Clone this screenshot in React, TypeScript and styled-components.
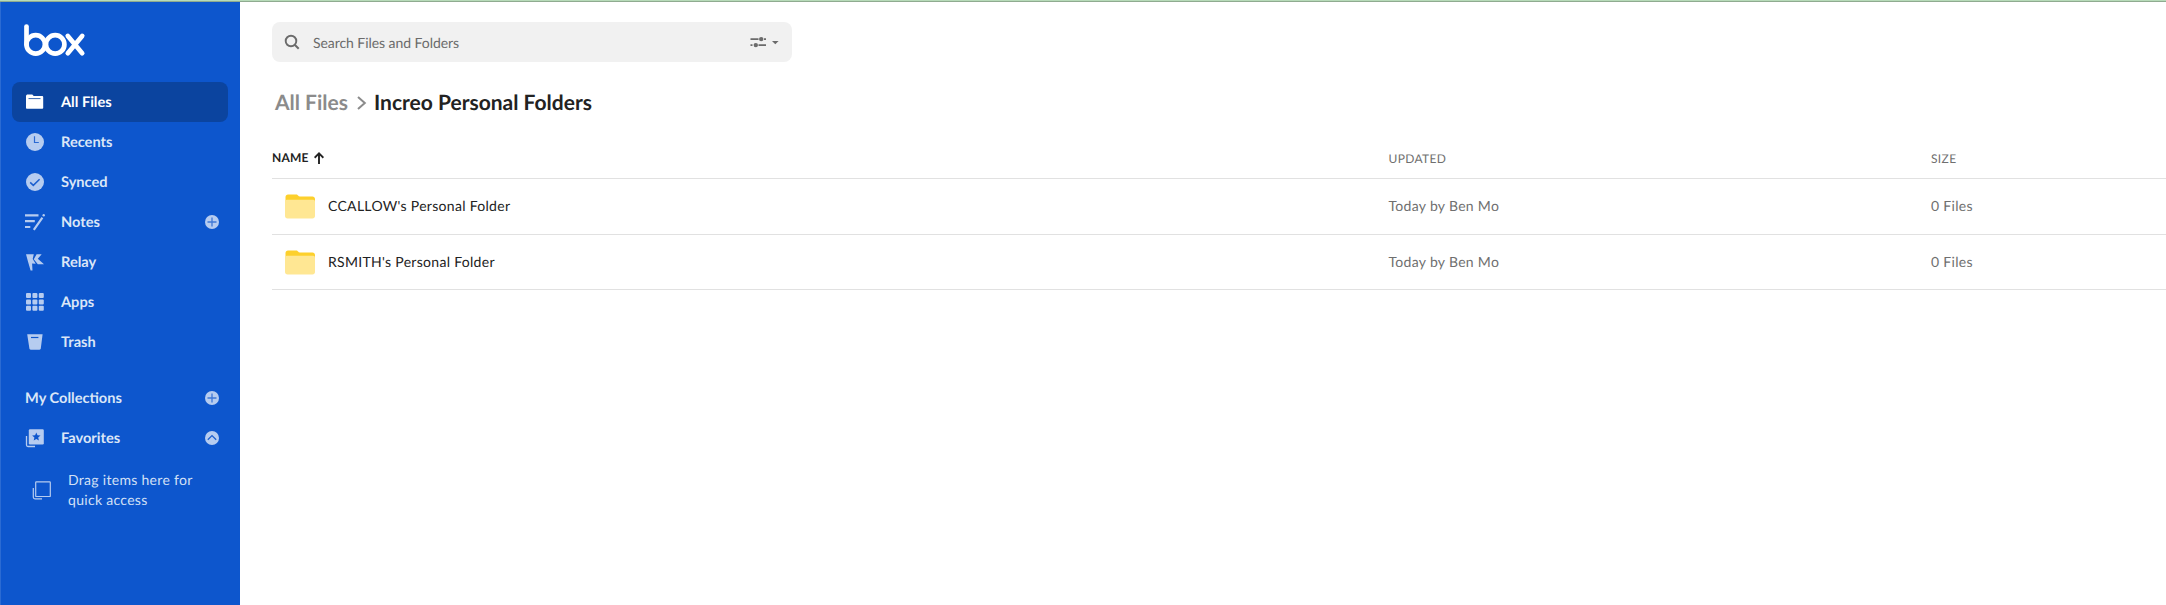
import React from 'react';
import styled, { createGlobalStyle, css } from 'styled-components';

const GlobalStyle = createGlobalStyle`
  *, *::before, *::after { box-sizing: border-box; }
  body {
    margin: 0;
    background: #fff;
    font-family: Lato, 'Liberation Sans', sans-serif;
    font-size: 14px;
    color: #222;
    text-rendering: geometricPrecision;
    -webkit-font-smoothing: antialiased;
  }
`;

const Page = styled.div`
  display: flex;
  flex-direction: column;
  height: 100vh;
  overflow: hidden;
`;

const TopStrip = styled.div`
  flex: none;
  height: 2px;
  background: #b7dbb9;
  border-bottom: 1px solid #8fab90;
`;

const Body = styled.div`
  display: flex;
  flex: 1;
  min-height: 0;
`;

const Sidebar = styled.aside`
  flex: none;
  width: 240px;
  padding: 22px 12px 0 11px;
  border-left: 1px solid #2b6bd3;
  background: #0d56cd;
  color: #dbe6f7;
`;

const LogoLink = styled.div`
  height: 58px;
  padding-left: 12px;
`;

const NavList = styled.nav`
  display: flex;
  flex-direction: column;
`;

const NavItem = styled.div<{ $active?: boolean }>`
  display: flex;
  align-items: center;
  height: 40px;
  padding: 0 8px 0 13px;
  border-radius: 8px;
  font-weight: 700;
  font-size: 14.6px;
  line-height: 20px;
  ${({ $active }) =>
    $active &&
    css`
      background: #0b449f;
      color: #fff;
    `}
`;

const NavIcon = styled.span<{ $active?: boolean }>`
  display: flex;
  width: 20px;
  height: 20px;
  margin-right: 16px;
  color: ${({ $active }) => ($active ? '#fff' : '#b6ccf0')};
`;

const NavLabel = styled.span`
  flex: 1;
  padding-top: 2px;
`;

const RoundAction = styled.span`
  display: flex;
  width: 16px;
  height: 16px;
  color: #b6ccf0;
`;

const SectionHeading = styled(NavItem)`
  margin-top: 16px;
`;

const DropHint = styled.div`
  display: flex;
  align-items: center;
  margin-top: 12px;
  padding-left: 20px;
  gap: 16px;
  font-size: 14px;
  line-height: 20px;
  letter-spacing: 0.3px;
  color: #d3e0f6;
`;

const Main = styled.main`
  flex: 1;
  min-width: 0;
  padding: 20px 0 0 32px;
`;

const SearchBar = styled.div`
  display: flex;
  align-items: center;
  width: 520px;
  height: 40px;
  padding: 0 12px;
  border-radius: 8px;
  background: #f1f1f1;
  color: #6b6b6b;
`;

const SearchText = styled.span`
  flex: 1;
  padding-left: 13px;
  font-size: 14px;
  letter-spacing: -0.06px;
`;

const Breadcrumb = styled.div`
  display: flex;
  align-items: center;
  height: 28px;
  margin-top: 27px;
  padding-left: 3px;
  font-size: 21px;
  font-weight: 700;
  line-height: 28px;
`;

const Crumb = styled.span<{ $current?: boolean }>`
  color: ${({ $current }) => ($current ? '#222' : '#8b8b8b')};
`;

const CrumbArrow = styled.svg`
  margin: 0 7px 0 8px;
`;

const Columns = styled.div`
  display: grid;
  grid-template-columns: 1116.5px 542.5px 1fr;
  align-items: center;
  border-bottom: 1px solid #e1e1e1;
`;

const TableHead = styled(Columns)`
  height: 62px;
  padding-top: 21px;
`;

const HeadCell = styled.div<{ $sorted?: boolean }>`
  display: flex;
  align-items: center;
  gap: 5px;
  padding-top: ${({ $sorted }) => ($sorted ? '0' : '2px')};
  font-size: 12px;
  line-height: 16px;
  font-weight: ${({ $sorted }) => ($sorted ? 700 : 400)};
  color: ${({ $sorted }) => ($sorted ? '#222' : '#6f6f6f')};
  letter-spacing: ${({ $sorted }) => ($sorted ? '0.2px' : '0.35px')};
`;

const Row = styled(Columns)`
  height: 56px;
  padding-bottom: 2px;
  &:last-child { height: 55px; padding-bottom: 1px; }
`;

const NameCell = styled.div`
  display: flex;
  align-items: center;
  gap: 12px;
  padding-left: 12px;
  letter-spacing: 0.3px;
`;

const MutedCell = styled.div`
  color: #6f6f6f;
  letter-spacing: 0.3px;
`;

const BoxLogo = () => (
  <svg width="62" height="34" viewBox="24 24 62 34" fill="none" stroke="#fff" strokeWidth="4.7" strokeLinecap="round">
    <path d="M26.5 26.5V44.5" />
    <circle cx="35.7" cy="44.4" r="9.2" />
    <circle cx="55.2" cy="44.4" r="9.2" />
    <path d="M67.8 35.9L82.2 53.2M82.2 35.9L67.8 53.2" />
  </svg>
);

const icons: Record<string, React.ReactNode> = {
  folder: (
    <>
      <path fill="currentColor" d="M2.7 2.4h4.6l1.4 1.7h8.6c.5 0 .9.4.9.9v10.9c0 .4-.4.8-.9.8H1.8c-.5 0-.8-.4-.8-.8V4C1 3.1 1.8 2.4 2.7 2.4z" />
      <path stroke="#3566b0" strokeWidth="1" d="M3.5 6.6h12" />
    </>
  ),
  clock: (
    <>
      <circle cx="10" cy="10" r="9" fill="currentColor" />
      <path d="M9.5 4.2v6.3h4.3" stroke="#2b69d2" strokeWidth="1.2" />
    </>
  ),
  check: (
    <>
      <circle cx="10" cy="10" r="9" fill="currentColor" />
      <path d="M5.2 10.4l3.1 3 6.3-6.2" stroke="#1c5fcf" strokeWidth="1.5" />
    </>
  ),
  notes: (
    <g stroke="currentColor" strokeWidth="2.2">
      <path d="M0 3.3h13.5M0 9.2h9.8M0 15h5.3M8.8 17.9l8.6-12.2" />
      <circle cx="18.7" cy="3.3" r="1.2" fill="currentColor" stroke="none" />
    </g>
  ),
  relay: (
    <g fill="currentColor">
      <path d="M1 2.2h7.8L7.7 6.9l3 4.8-3.6-.1.4 7H5.6L2.9 9.2z" />
      <path d="M11.6 2.2h5.1L12.8 6.7l6.2 5.6h-6.2L8.8 7.2z" />
    </g>
  ),
  apps: (
    <g fill="currentColor">
      {[1, 7.4, 13.8].map((y) => [1, 7.4, 13.8].map((x) => <rect key={`${x}-${y}`} x={x} y={y} width="5" height="5" rx="1" />))}
    </g>
  ),
  trash: (
    <>
      <path fill="currentColor" d="M2.2 2.3h15.4L15.8 16.6c-.1.7-.6 1.2-1.3 1.2H5.7c-.7 0-1.2-.5-1.3-1.2z" />
      <path d="M6 5.5h7.4" stroke="#0d56cd" strokeWidth="1.2" />
    </>
  ),
  favorites: (
    <>
      <rect x="3.8" y="1.2" width="15" height="15.2" rx="1.2" fill="currentColor" />
      <path d="M1.5 8v9c0 .9.6 1.5 1.5 1.5h7" stroke="currentColor" strokeWidth="1.3" />
      <path fill="#0d56cd" d="M11.3 4.5l1.2 2.8 3 .2-2.3 2 .7 3-2.6-1.6-2.6 1.6.7-3-2.3-2 3-.2z" />
    </>
  ),
  stack: (
    <g stroke="#b6ccf0" strokeWidth="1.2">
      <rect x="3.7" y="1.9" width="14.6" height="14.6" rx=".6" />
      <path d="M1.3 8v9.3c0 1 .6 1.5 1.7 1.5h7" />
    </g>
  ),
};

const Icon = ({ name }: { name: string }) => (
  <svg width="20" height="20" viewBox="0 0 20 20" fill="none">
    {icons[name]}
  </svg>
);

const ActionIcon = ({ kind }: { kind: 'plus' | 'up' }) => (
  <RoundAction>
    <svg width="16" height="16" viewBox="0 0 16 16" fill="none">
      <circle cx="8" cy="8" r="7" fill="currentColor" />
      <path d={kind === 'plus' ? 'M8 3.5v9M3.5 8h9' : 'M3.8 9.8L8 5.6l4.2 4.2'} stroke={kind === 'plus' ? '#3f78d6' : '#1c5fcf'} strokeWidth="1.3" />
    </svg>
  </RoundAction>
);

const FolderIcon = () => (
  <svg width="32" height="32" viewBox="0 0 32 32">
    <path fill="#fdd02c" d="M4 4.5h8.3c.8 0 1.3.5 1.8 1.1.4.5.9.9 1.8.9h12.6c1.4 0 2.5 1 2.5 2.4V12H1.5V7c0-1.4 1.1-2.5 2.5-2.5z" />
    <path fill="#ffe793" d="M1 11.6c0-1 .8-1.8 1.8-1.8h26.4c1 0 1.8.8 1.8 1.8v14.3c0 1.5-1.1 2.5-2.5 2.5h-25C2.1 28.4 1 27.4 1 25.9z" />
  </svg>
);

const navItems = [
  { icon: 'folder', label: 'All Files', active: true },
  { icon: 'clock', label: 'Recents' },
  { icon: 'check', label: 'Synced' },
  { icon: 'notes', label: 'Notes', addable: true },
  { icon: 'relay', label: 'Relay' },
  { icon: 'apps', label: 'Apps' },
  { icon: 'trash', label: 'Trash' },
];

const folders = ["CCALLOW's Personal Folder", "RSMITH's Personal Folder"];

export default function App() {
  return (
    <Page>
      <GlobalStyle />
      <TopStrip />
      <Body>
        <Sidebar>
          <LogoLink><BoxLogo /></LogoLink>
          <NavList>
            {navItems.map(({ icon, label, active, addable }) => (
              <NavItem key={label} $active={active}>
                <NavIcon $active={active}><Icon name={icon} /></NavIcon>
                <NavLabel>{label}</NavLabel>
                {addable && <ActionIcon kind="plus" />}
              </NavItem>
            ))}
          </NavList>
          <SectionHeading>
            <NavLabel>My Collections</NavLabel>
            <ActionIcon kind="plus" />
          </SectionHeading>
          <NavItem>
            <NavIcon><Icon name="favorites" /></NavIcon>
            <NavLabel>Favorites</NavLabel>
            <ActionIcon kind="up" />
          </NavItem>
          <DropHint>
            <Icon name="stack" />
            <span>Drag items here for<br />quick access</span>
          </DropHint>
        </Sidebar>
        <Main>
          <SearchBar>
            <svg width="16" height="16" viewBox="0 0 16 16" fill="none" stroke="currentColor">
              <circle cx="7" cy="7" r="5.3" strokeWidth="1.9" />
              <path d="M11 11l3.7 3.7" strokeWidth="2" />
            </svg>
            <SearchText>Search Files and Folders</SearchText>
            <svg width="30" height="16" viewBox="0 0 30 16" fill="currentColor">
              <path d="M.5 4.2h8v1.8h-8zM14 4.2h2v1.8h-2zM.5 10.2h2v1.8h-2zM8.5 10.2H16v1.8H8.5z" />
              <circle cx="11.2" cy="5.1" r="2.2" />
              <circle cx="5.8" cy="11.1" r="2.2" />
              <path d="M22 7h6.6l-3.3 3.3z" />
            </svg>
          </SearchBar>
          <Breadcrumb>
            <Crumb>All Files</Crumb>
            <CrumbArrow width="11" height="16" viewBox="0 0 11 16" fill="none" stroke="#8b8b8b" strokeWidth="2">
              <path d="M2 2l6.8 6L2 14" />
            </CrumbArrow>
            <Crumb $current>Increo Personal Folders</Crumb>
          </Breadcrumb>
          <TableHead>
            <HeadCell $sorted>
              NAME
              <svg width="10" height="12" viewBox="0 0 10 12" fill="none" stroke="#222" strokeWidth="1.9">
                <path d="M5 12V1.5M.6 5.7L5 1.4l4.4 4.3" />
              </svg>
            </HeadCell>
            <HeadCell>UPDATED</HeadCell>
            <HeadCell>SIZE</HeadCell>
          </TableHead>
          <div>
            {folders.map((name) => (
              <Row key={name}>
                <NameCell><FolderIcon />{name}</NameCell>
                <MutedCell>Today by Ben Mo</MutedCell>
                <MutedCell>0 Files</MutedCell>
              </Row>
            ))}
          </div>
        </Main>
      </Body>
    </Page>
  );
}
